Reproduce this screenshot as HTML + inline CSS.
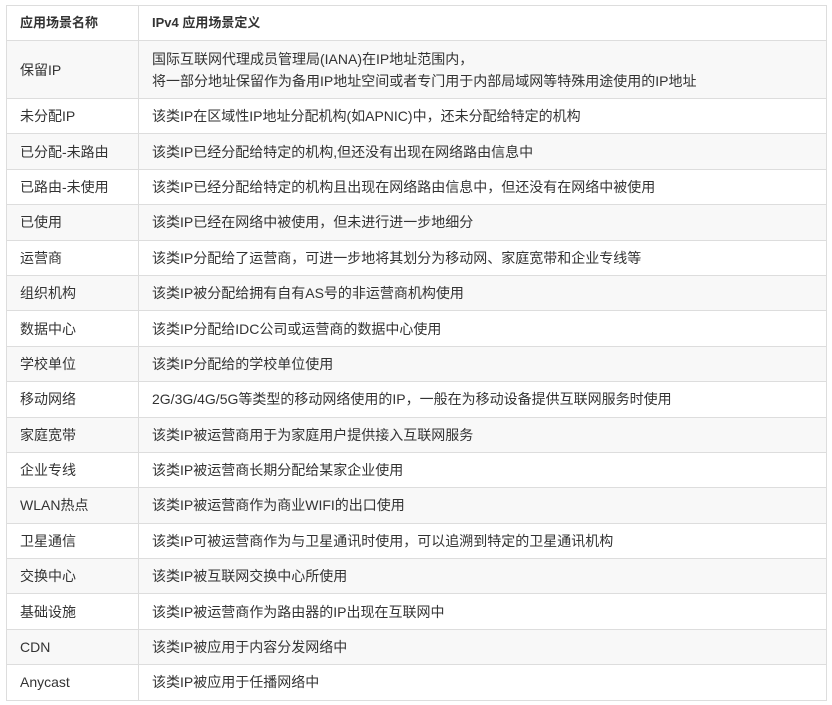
<!DOCTYPE html>
<html><head><meta charset="utf-8"><style>
body{margin:0;background:#fff;}
table{position:absolute;left:6px;top:5px;width:821px;border-collapse:collapse;font-family:"Liberation Sans","Noto Sans CJK SC",sans-serif;font-size:14px;color:#333;}
td,th{border:1px solid #ddd;padding:0 0 0 13px;text-align:left;vertical-align:middle;line-height:22px;}
th{font-weight:bold;height:34px;font-size:13px;}
td{height:34.4px;}
tr:nth-child(even) td{background:#f8f8f8;}
td:first-child,th:first-child{width:118px;}
tr.two td{height:57px;}
</style></head><body>
<table>
<tr><th>应用场景名称</th><th>IPv4 应用场景定义</th></tr>
<tr class="two"><td>保留IP</td><td>国际互联网代理成员管理局(IANA)在IP地址范围内，<br>将一部分地址保留作为备用IP地址空间或者专门用于内部局域网等特殊用途使用的IP地址</td></tr>
<tr><td>未分配IP</td><td>该类IP在区域性IP地址分配机构(如APNIC)中，还未分配给特定的机构</td></tr>
<tr><td>已分配-未路由</td><td>该类IP已经分配给特定的机构,但还没有出现在网络路由信息中</td></tr>
<tr><td>已路由-未使用</td><td>该类IP已经分配给特定的机构且出现在网络路由信息中，但还没有在网络中被使用</td></tr>
<tr><td>已使用</td><td>该类IP已经在网络中被使用，但未进行进一步地细分</td></tr>
<tr><td>运营商</td><td>该类IP分配给了运营商，可进一步地将其划分为移动网、家庭宽带和企业专线等</td></tr>
<tr><td>组织机构</td><td>该类IP被分配给拥有自有AS号的非运营商机构使用</td></tr>
<tr><td>数据中心</td><td>该类IP分配给IDC公司或运营商的数据中心使用</td></tr>
<tr><td>学校单位</td><td>该类IP分配给的学校单位使用</td></tr>
<tr><td>移动网络</td><td>2G/3G/4G/5G等类型的移动网络使用的IP，一般在为移动设备提供互联网服务时使用</td></tr>
<tr><td>家庭宽带</td><td>该类IP被运营商用于为家庭用户提供接入互联网服务</td></tr>
<tr><td>企业专线</td><td>该类IP被运营商长期分配给某家企业使用</td></tr>
<tr><td>WLAN热点</td><td>该类IP被运营商作为商业WIFI的出口使用</td></tr>
<tr><td>卫星通信</td><td>该类IP可被运营商作为与卫星通讯时使用，可以追溯到特定的卫星通讯机构</td></tr>
<tr><td>交换中心</td><td>该类IP被互联网交换中心所使用</td></tr>
<tr><td>基础设施</td><td>该类IP被运营商作为路由器的IP出现在互联网中</td></tr>
<tr><td>CDN</td><td>该类IP被应用于内容分发网络中</td></tr>
<tr><td>Anycast</td><td>该类IP被应用于任播网络中</td></tr>
</table>
</body></html>
